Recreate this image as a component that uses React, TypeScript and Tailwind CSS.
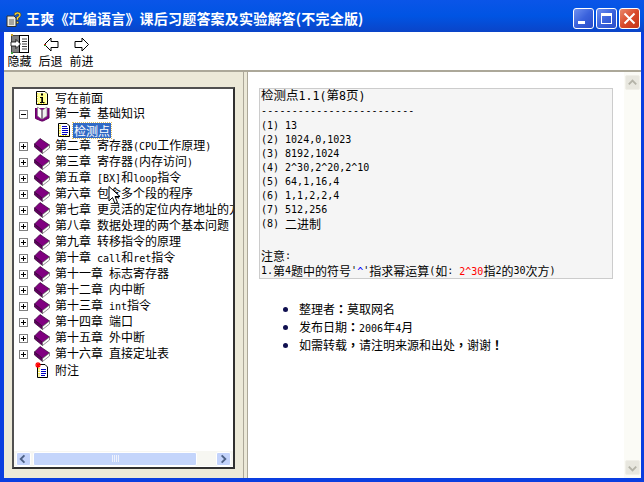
import type { ReactNode } from "react";

const CJK = '"Noto Sans CJK SC", "Liberation Sans", sans-serif';

// half width runs are set in a 6px mono, the way the old bitmap font spaces them
function Txt({ text }: { text: string }) {
  const parts = text.split(/([\x20-\x7e]+)/).filter(Boolean);
  return (
    <>
      {parts.map((p, i) =>
        /^[\x20-\x7e]+$/.test(p) ? (
          <span key={i} className="font-['DejaVu_Sans_Mono',monospace] text-[10px]">
            {p}
          </span>
        ) : (
          <span key={i}>{p}</span>
        )
      )}
    </>
  );
}

function BookClosed() {
  return (
    <svg width="16" height="16" viewBox="0 0 16 16" className="shrink-0">
      <path d="M0.5 6 L6 0.5 L15.5 7 L8.5 12.5 Z" fill="#800080" stroke="#300030" strokeWidth="0.7" />
      <path d="M0.5 6 V9 L8.5 15.5 V12.5 Z" fill="#600060" stroke="#300030" strokeWidth="0.7" />
      <path d="M8.5 12.5 L15.5 7 V10 L8.5 15.5 Z" fill="#ffffff" stroke="#606060" strokeWidth="0.7" />
    </svg>
  );
}

function BookOpen() {
  return (
    <svg width="16" height="16" viewBox="0 0 16 16" className="shrink-0">
      <path d="M1.5 2 V12.5 L7.5 15 H9 L15 12 V2" fill="#800080" stroke="#600060" strokeWidth="1" />
      <path d="M3.5 1 L7.5 4 V13 L3.5 10 Z" fill="#ffffff" stroke="#808080" strokeWidth="0.7" />
      <path d="M13 1 L8.5 4 V13 L13 10 Z" fill="#f0f0f0" stroke="#808080" strokeWidth="0.7" />
    </svg>
  );
}

function DocBase({ children }: { children: ReactNode }) {
  return (
    <svg width="16" height="16" viewBox="0 0 16 16" className="shrink-0">
      <path d="M2.5 1.5 H11 L13.5 4 V14.5 H2.5 Z" fill="#ffffff" stroke="#000000" />
      <path d="M4 3 V13.5" stroke="#f0e000" strokeWidth="1.4" strokeDasharray="1.5 1" />
      <path d="M4 13.5 H12.5" stroke="#f0e000" strokeWidth="1" strokeDasharray="1.5 1" />
      {children}
    </svg>
  );
}

function DocLines() {
  return (
    <DocBase>
      <path d="M6 4.5 H11 M6 6.5 H12 M6 8.5 H12 M6 10.5 H12 M6 12.5 H11" stroke="#0000c0" />
    </DocBase>
  );
}

function DocInfo() {
  return (
    <DocBase>
      <rect x="4" y="3" width="8.5" height="10" fill="#ffff90" />
      <path d="M7 3.5 H9 V5.5 H7 Z M6 7 H9 V12 H10.5 V13 H6 V12 H7.3 V8 H6 Z" fill="#000000" />
    </DocBase>
  );
}

function DocNote() {
  return (
    <svg width="16" height="16" viewBox="0 0 16 16" className="shrink-0">
      <path d="M3.5 2.5 H11 L13.5 5 V15.5 H3.5 Z" fill="#ffffff" stroke="#000000" />
      <path d="M5 6 V14.5" stroke="#f0e000" strokeWidth="1.4" strokeDasharray="1.5 1" />
      <path d="M7 7.5 H12 M7 9.5 H12 M7 11.5 H12 M7 13.5 H11" stroke="#0000c0" />
      <path d="M4 0 V6 M1 3 H7 M2 1 L6 5 M6 1 L2 5" stroke="#ff0000" strokeWidth="1.2" />
    </svg>
  );
}

function Toggle({ open }: { open?: boolean }) {
  return (
    <span className="relative w-[9px] h-[9px] border border-[#808080] bg-white shrink-0 flex items-center justify-center">
      <span className="w-[5px] h-px bg-black" />
      {!open && <span className="absolute w-px h-[5px] bg-black" />}
    </span>
  );
}

const chapters = [
  "第二章 寄存器(CPU工作原理)",
  "第三章 寄存器(内存访问)",
  "第五章 [BX]和loop指令",
  "第六章 包含多个段的程序",
  "第七章 更灵活的定位内存地址的方法",
  "第八章 数据处理的两个基本问题",
  "第九章 转移指令的原理",
  "第十章 call和ret指令",
  "第十一章 标志寄存器",
  "第十二章 内中断",
  "第十三章 int指令",
  "第十四章 端口",
  "第十五章 外中断",
  "第十六章 直接定址表",
];

function Row({ toggle, icon, label }: { toggle?: ReactNode; icon: ReactNode; label: string }) {
  return (
    <div className="h-4 flex items-center whitespace-nowrap">
      <span className="w-[20px] pl-[5px] flex items-center shrink-0">{toggle}</span>
      {icon}
      <span className="ml-[5px] text-[12px] leading-4 text-black">
        <Txt text={label} />
      </span>
    </div>
  );
}

function Chevron({ dir, color }: { dir: "l" | "r" | "u" | "d"; color: string }) {
  const d = { l: "M8 3 L4 7 L8 11", r: "M5 3 L9 7 L5 11", u: "M3 8.5 L7 4.5 L11 8.5", d: "M3 5.5 L7 9.5 L11 5.5" }[dir];
  return (
    <svg width="14" height="14" viewBox="0 0 14 14">
      <path d={d} fill="none" stroke={color} strokeWidth="2" />
    </svg>
  );
}

function Tree() {
  return (
    <div className="mt-[15px] ml-[8px] w-[223px] h-[382px] border-2 border-t-[#505050] border-l-[#505050] border-r-[#303030] border-b-[#303030] bg-white flex flex-col overflow-hidden">
      <div className="flex-1 pt-px overflow-hidden">
        <Row icon={<DocInfo />} label="写在前面" />
        <Row toggle={<Toggle open />} icon={<BookOpen />} label="第一章 基础知识" />
        <div className="h-4 flex items-center pl-[42px] whitespace-nowrap">
          <DocLines />
          <span className="ml-[1px] px-px h-[15px] bg-[#316ac5] text-white text-[12px] leading-[15px] outline-1 outline-dotted outline-[#e0c060]">
            检测点
          </span>
        </div>
        {chapters.map((c) => (
          <Row key={c} toggle={<Toggle />} icon={<BookClosed />} label={c} />
        ))}
        <Row icon={<DocNote />} label="附注" />
      </div>
      <div className="h-[15px] mb-[1px] flex items-center bg-[#f7f7f2] pl-[2px] pr-[2px] gap-px">
        <span className="w-[15px] h-[14px] rounded-[2px] border border-white bg-[#c3d3fb] flex items-center justify-center">
          <Chevron dir="l" color="#4d6185" />
        </span>
        <span className="ml-[1px] w-[164px] h-[14px] rounded-[2px] border border-white bg-[#c4d5fb] flex items-center justify-center gap-px">
          <span className="w-px h-[7px] bg-[#eef2fd]" />
          <span className="w-px h-[7px] bg-[#eef2fd]" />
          <span className="w-px h-[7px] bg-[#eef2fd]" />
          <span className="w-px h-[7px] bg-[#eef2fd]" />
        </span>
        <span className="flex-1" />
        <span className="w-[15px] h-[14px] rounded-[2px] border border-white bg-[#c3d3fb] flex items-center justify-center">
          <Chevron dir="r" color="#4d6185" />
        </span>
      </div>
    </div>
  );
}

function PreLine({ h, children }: { h: string; children?: ReactNode }) {
  return <div className={`${h} flex items-center whitespace-pre text-[12px] leading-[13px] text-black`}>{children}</div>;
}

const answers = ["(1) 13", "(2) 1024,0,1023", "(3) 8192,1024", "(4) 2^30,2^20,2^10", "(5) 64,1,16,4", "(6) 1,1,2,2,4", "(7) 512,256"];

// fullwidth marks sit centred in the cell in the reference, the TC cut draws them that way
function Bullet({ text }: { text: string }) {
  return (
    <li className="h-[18px] flex items-center whitespace-pre">
      <span className="w-[5px] h-[5px] rounded-full bg-[#101050] mr-[11px] shrink-0" />
      <span>
        {text.split(/([\uFF1A\uFF0C\uFF01])/).map((p, i) =>
          /^[\uFF1A\uFF0C\uFF01]$/.test(p) ? (
            <span key={i} className="font-['Noto_Sans_CJK_TC',sans-serif] font-bold">
              {p}
            </span>
          ) : (
            <Txt key={i} text={p} />
          )
        )}
      </span>
    </li>
  );
}

function Content() {
  return (
    <div className="flex-1 min-w-0 pl-[11px] pt-[16px]">
      <div className="w-[354px] h-[191px] border border-[#cccccc] bg-[#f5f5f5] pl-px overflow-hidden">
        <PreLine h="h-[13px]">
          <span className="text-[12.5px]">
            检测点<span className="font-['DejaVu_Sans_Mono',monospace] text-[11.6px]">1.1(</span>第
            <span className="font-['DejaVu_Sans_Mono',monospace] text-[11.6px]">8</span>页
            <span className="font-['DejaVu_Sans_Mono',monospace] text-[11.6px]">)</span>
          </span>
        </PreLine>
        <PreLine h="h-[15px]">
          <span className="tracking-[0.12px]">
            <Txt text="-------------------------" />
          </span>
        </PreLine>
        <div className="mt-px">
          {answers.map((a) => (
            <PreLine key={a} h="h-[14px]">
              <Txt text={a} />
            </PreLine>
          ))}
          <PreLine h="h-[14px]">
            <Txt text="(8) 二进制" />
          </PreLine>
        </div>
        <PreLine h="h-[18px]" />
        <PreLine h="h-[15px]">
          <Txt text="注意:" />
        </PreLine>
        <PreLine h="h-[15px]">
          <Txt text="1.第4题中的符号'" />
          <span className="text-[#0000ff]">
            <Txt text="^" />
          </span>
          <Txt text="'指求幂运算(如: " />
          <span className="text-[#ff0000]">
            <Txt text="2^30" />
          </span>
          <Txt text="指2的30次方)" />
        </PreLine>
      </div>
      <ul className="mt-[21px] pl-[24px] flex flex-col text-[12px] text-black">
        <Bullet text={"整理者\uFF1A莫取网名"} />
        <Bullet text={"发布日期\uFF1A2006年4月"} />
        <Bullet text={"如需转载\uFF0C请注明来源和出处\uFF0C谢谢\uFF01"} />
      </ul>
    </div>
  );
}

function VScroll() {
  return (
    <div className="w-[17px] bg-[#fbfbf6] flex flex-col items-center justify-between pt-[3px] pb-[3px] shrink-0">
      <span className="w-[15px] h-[15px] rounded-[2px] border border-[#f0efe8] bg-[#e8e7df] flex items-center justify-center">
        <Chevron dir="u" color="#b4b3a8" />
      </span>
      <span className="w-[15px] h-[15px] rounded-[2px] border border-[#f0efe8] bg-[#e8e7df] flex items-center justify-center">
        <Chevron dir="d" color="#b4b3a8" />
      </span>
    </div>
  );
}

function CapButton({ kind }: { kind: "min" | "max" | "close" }) {
  const bg =
    kind === "close"
      ? "bg-gradient-to-br from-[#e8886c] via-[#d9492a] to-[#c4341a]"
      : "bg-gradient-to-br from-[#6f8ff0] via-[#3a62dc] to-[#2a4cc8]";
  return (
    <span className={`w-[21px] h-[21px] rounded-[3px] border border-white flex items-center justify-center ${bg}`}>
      {kind === "min" && <span className="w-[7px] h-[3px] bg-white mt-[8px] -ml-[4px]" />}
      {kind === "max" && <span className="w-[11px] h-[11px] border border-white border-t-[3px]" />}
      {kind === "close" && (
        <svg width="13" height="13" viewBox="0 0 13 13">
          <path d="M1.5 1.5 L11.5 11.5 M11.5 1.5 L1.5 11.5" stroke="#ffffff" strokeWidth="2" />
        </svg>
      )}
    </span>
  );
}

function TitleIcon() {
  return (
    <svg width="16" height="16" viewBox="0 0 16 16" className="shrink-0">
      <path d="M1 5 H8 L10 7 V15.5 H1 Z" fill="#ecebe0" stroke="#303030" />
      <path d="M3 9 H8 M3 11 H8 M3 13 H8" stroke="#606060" />
      <path d="M8 4 Q8 1 11.5 1 Q15 1 15 4 Q15 6 12.5 7 V9 H10.5 V6 Q13 5.5 13 4 Q13 3 11.5 3 Q10 3 10 4.5 Z M10.5 10.5 H12.5 V12.5 H10.5 Z" fill="#f8d838" stroke="#303030" strokeWidth="0.6" />
    </svg>
  );
}

function ToolButton({ icon, label }: { icon: ReactNode; label: string }) {
  return (
    <div className="w-[31px] flex flex-col items-center">
      <div className="h-[18px] flex items-center justify-center">{icon}</div>
      <span className="text-[12px] leading-[16px] text-black">{label}</span>
    </div>
  );
}

function Arrow({ right }: { right?: boolean }) {
  return (
    <svg width="16" height="15" viewBox="0 0 16 15" className={right ? "-scale-x-100" : ""}>
      <path d="M8 1 L1.5 7.5 L8 14 V10.5 H15 V4.5 H8 Z" fill="#ffffff" stroke="#000000" />
      {!right && <rect x="1" y="7" width="2" height="1" fill="#d02020" />}
      {!right && <rect x="1" y="8" width="2" height="1" fill="#20a020" />}
    </svg>
  );
}

function HideIcon() {
  return (
    <svg width="20" height="20" viewBox="0 0 20 20">
      <rect x="1.5" y="1.5" width="8" height="17" fill="#808080" stroke="#404040" />
      <rect x="9.5" y="1.5" width="9" height="17" fill="#ffffff" stroke="#000000" />
      <path d="M12 5 H17 M12 7.5 H17 M12 10 H17 M12 12.5 H17 M12 15 H17" stroke="#404040" />
      <path d="M1 8 H6 V5.5 L10.5 10 L6 14.5 V12 H1 Z" fill="#ffffff" stroke="#000000" strokeWidth="0.8" />
      <rect x="1" y="0" width="2" height="2" fill="#c8a020" />
      <rect x="1" y="18" width="2" height="2" fill="#40a040" />
    </svg>
  );
}

function Cursor() {
  return (
    <svg width="14" height="20" viewBox="0 0 14 20" className="absolute left-[108px] top-[186px]">
      <path d="M1 0.5 V15 L4.5 11.5 L7 17.5 L9.5 16.5 L7 10.5 H12 Z" fill="#ffffff" stroke="#000000" />
    </svg>
  );
}

export default function App() {
  return (
    <div
      className="relative w-[644px] h-[482px] overflow-hidden flex flex-col bg-[#0a3ee0] pl-[4px] pr-[3px] pb-[4px]"
      style={{ fontFamily: CJK }}
    >
      {/* title bar */}
      <div className="-ml-[4px] -mr-[3px] h-[32px] shrink-0 pl-[6px] pr-[4px] pt-[5px] flex items-center bg-gradient-to-b from-[#0a55e8] via-[#0054e3] to-[#0a44c8]">
        <TitleIcon />
        <span className="ml-[4px] text-[14px] font-bold tracking-[0.2px] text-white whitespace-nowrap">王爽《汇编语言》课后习题答案及实验解答(不完全版)</span>
        <div className="ml-auto flex gap-[2px]">
          <CapButton kind="min" />
          <CapButton kind="max" />
          <CapButton kind="close" />
        </div>
      </div>

      {/* toolbar */}
      <div className="h-[40px] shrink-0 bg-white border-b-2 border-[#aca899] flex pt-[3px] items-start">
        <ToolButton icon={<HideIcon />} label="隐藏" />
        <ToolButton icon={<Arrow />} label="后退" />
        <ToolButton icon={<Arrow right />} label="前进" />
      </div>

      {/* panes */}
      <div className="flex-1 min-h-0 flex">
        <div className="w-[240px] bg-[#ece9d8] border-r border-[#aca899] shrink-0">
          <Tree />
        </div>
        <div className="w-[4px] bg-[#ece9d8] border-r border-[#aca899] shrink-0" />
        <div className="flex-1 min-w-0 bg-white flex">
          <Content />
          <VScroll />
        </div>
      </div>
      <Cursor />
    </div>
  );
}
